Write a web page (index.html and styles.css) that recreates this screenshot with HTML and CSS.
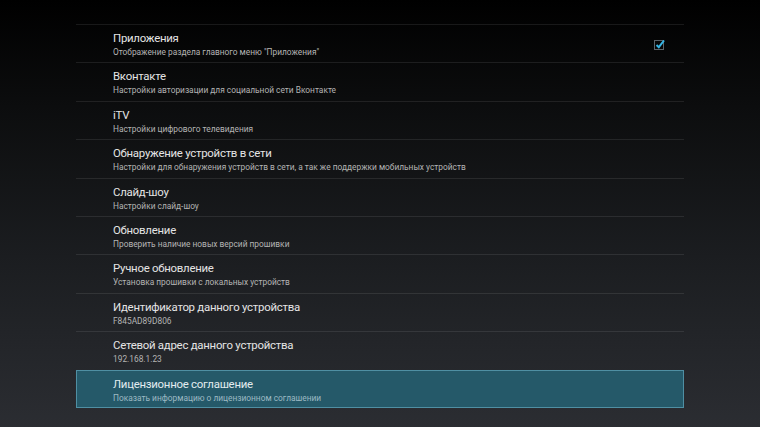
FILE: index.html
```html
<!DOCTYPE html>
<html lang="ru">
<head>
<meta charset="utf-8">
<link rel="stylesheet" href="styles.css">
</head>
<body>
<div class="list">
  <div class="row">
    <div class="text">
      <div class="title">Приложения</div>
      <div class="sub">Отображение раздела главного меню "Приложения"</div>
    </div>
    <div class="check">
      <svg width="14" height="14" viewBox="0 0 14 14">
        <rect x="1.5" y="3.5" width="9" height="9" fill="none" stroke="#5a6268" stroke-width="1"/>
        <path d="M3.5 8 L5.8 10.2 L11 3.5" fill="none" stroke="#35b5e5" stroke-width="2"/>
      </svg>
    </div>
  </div>
  <div class="row">
    <div class="text">
      <div class="title">Вконтакте</div>
      <div class="sub">Настройки авторизации для социальной сети Вконтакте</div>
    </div>
  </div>
  <div class="row">
    <div class="text">
      <div class="title">iTV</div>
      <div class="sub">Настройки цифрового телевидения</div>
    </div>
  </div>
  <div class="row">
    <div class="text">
      <div class="title">Обнаружение устройств в сети</div>
      <div class="sub">Настройки для обнаружения устройств в сети, а так же поддержки мобильных устройств</div>
    </div>
  </div>
  <div class="row">
    <div class="text">
      <div class="title">Слайд-шоу</div>
      <div class="sub">Настройки слайд-шоу</div>
    </div>
  </div>
  <div class="row">
    <div class="text">
      <div class="title">Обновление</div>
      <div class="sub">Проверить наличие новых версий прошивки</div>
    </div>
  </div>
  <div class="row">
    <div class="text">
      <div class="title">Ручное обновление</div>
      <div class="sub">Установка прошивки с локальных устройств</div>
    </div>
  </div>
  <div class="row">
    <div class="text">
      <div class="title">Идентификатор данного устройства</div>
      <div class="sub">F845AD89D806</div>
    </div>
  </div>
  <div class="row">
    <div class="text">
      <div class="title">Сетевой адрес данного устройства</div>
      <div class="sub">192.168.1.23</div>
    </div>
  </div>
  <div class="row selected">
    <div class="text">
      <div class="title">Лицензионное соглашение</div>
      <div class="sub">Показать информацию о лицензионном соглашении</div>
    </div>
  </div>
</div>
</body>
</html>
```
FILE: styles.css
```css
html, body {
  margin: 0;
  padding: 0;
  height: 100%;
}
body {
  width: 760px;
  height: 427px;
  overflow: hidden;
  background: linear-gradient(180deg, #000000 0%, #0c0d0e 25%, #1b1d20 60%, #2b2d32 100%);
  font-family: Roboto, "Noto Sans", sans-serif;
  color: #e8e8e8;
}
.list {
  margin: 24px 76px 0 76px;
  width: 608px;
}
.row {
  box-sizing: border-box;
  height: 38.4px;
  border-top: 1px solid rgba(255, 255, 255, 0.09);
  padding: 6px 0 0 37px;
  display: flex;
  justify-content: space-between;
  align-items: flex-start;
}
.title {
  font-size: 11.4px;
  line-height: 15px;
  letter-spacing: -0.25px;
  color: #e4e4e4;
}
.sub {
  font-size: 8.35px;
  line-height: 12px;
  color: #b4b4b4;
}
.check {
  margin: 6px 17px 0 0;
  width: 14px;
  height: 14px;
}
.check svg {
  display: block;
}
.selected {
  background: #255969;
  border: 1px solid #4f8fa3;
  padding-left: 36px;
}
.selected .title {
  color: #e2ecef;
}
.selected .sub {
  color: #9dbac4;
}
```
